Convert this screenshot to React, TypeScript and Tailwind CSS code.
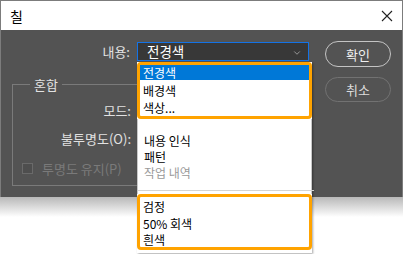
import { ChevronDown } from "lucide-react";

const font = { fontFamily: '"Noto Sans CJK KR", "Noto Sans", sans-serif' };

function ListRow({
  label,
  active = false,
  dim = false,
  h = "h-[17px]",
}: {
  label: string;
  active?: boolean;
  dim?: boolean;
  h?: string;
}) {
  return (
    <div
      className={`flex ${h} items-center pl-[3px] text-[12px] leading-none ${
        active ? "bg-[#0078d7] text-white" : dim ? "text-[#9a9a9a]" : "text-black"
      }`}
    >
      {label}
    </div>
  );
}

function FillMenu() {
  return (
    <div className="absolute left-[-1px] top-[19px] z-10 flex h-[191px] w-[175px] flex-col bg-white shadow-[1px_1px_2px_rgba(0,0,0,0.35)]">
      <div className="h-[57px] rounded-[4px] border-[3px] border-[#ffa300]">
        <ListRow label="전경색" active h="h-[15px]" />
        <div className="h-[2px]" />
        <ListRow label="배경색" />
        <ListRow label="색상..." />
      </div>
      <div className="flex flex-col border-x border-[#c8c8c8] pl-[3px] pt-[14px]">
        <ListRow label="내용 인식" h="h-[16px]" />
        <ListRow label="패턴" h="h-[16px]" />
        <ListRow label="작업 내역" dim h="h-[16px]" />
        <div className="mx-[-3px] mt-[9px] h-px bg-[#d4d4d4]" />
        <div className="h-[3px]" />
      </div>
      <div className="h-[56px] rounded-[4px] border-[3px] border-[#ffa300] pt-[2px]">
        <ListRow label="검정" h="h-[16.5px]" />
        <ListRow label="50% 회색" h="h-[16.5px]" />
        <ListRow label="흰색" h="h-[16.5px]" />
      </div>
    </div>
  );
}

function FieldLabel({ children }: { children: string }) {
  return (
    <span className="w-[118px] text-right text-[13px] leading-none text-[#e2e2e2]">
      {children}
    </span>
  );
}

export default function App() {
  return (
    <div className="flex h-[254px] w-[403px] flex-col overflow-hidden bg-white" style={font}>
      <div className="shrink-0 border border-b-0 border-[#7c7c7c]">
        {/* title bar */}
        <div className="flex h-[29px] items-center justify-between bg-white px-[9px]">
          <span className="text-[14px] leading-none text-black">칠</span>
          <svg width="12" height="12" viewBox="0 0 12 12">
            <path d="M1 1 L11 11 M11 1 L1 11" stroke="#222" strokeWidth="1.1" />
          </svg>
        </div>

        {/* body */}
        <div className="flex h-[167px] bg-[#535353]">
          <div className="flex w-[311px] flex-col">
            <div className="mt-[12px] flex h-[19px] items-center">
              <span className="w-[129px] text-right text-[13px] leading-none text-[#e2e2e2]">
                내용:
              </span>
              <div className="relative ml-[7px] flex h-[19px] w-[172px] items-center justify-between border border-[#1473e6] bg-[#383838] pl-[9px] pr-[6px]">
                <span className="text-[13.5px] leading-none text-white">전경색</span>
                <ChevronDown size={10} strokeWidth={2} className="mt-[2px] text-[#a8a8a8]" />
                <FillMenu />
              </div>
            </div>

            <div className="ml-[11px] mt-[23px] flex h-[102px] w-[298px] flex-col border border-[#7a7a7a]">
              <div className="ml-[17px] -mt-[8px] h-[15px] w-fit bg-[#535353] px-[4px] text-[13px] leading-[15px] text-[#e2e2e2]">
                혼합
              </div>
              <div className="mt-[10px] flex h-[16px] items-center">
                <FieldLabel>모드:</FieldLabel>
              </div>
              <div className="mt-[12px] flex h-[16px] items-center">
                <FieldLabel>불투명도(O):</FieldLabel>
              </div>
              <div className="mt-[14px] flex h-[16px] items-center pl-[9px]">
                <span className="h-[11px] w-[11px] border border-[#6a6a6a] bg-[#4e4e4e]" />
                <span className="ml-[9px] text-[13px] leading-none text-[#7a7a7a]">
                  투명도 유지(P)
                </span>
              </div>
            </div>
          </div>

          <div className="flex flex-col gap-[10px] pl-[13px] pt-[11px]">
            <button className="flex h-[26px] w-[66px] items-center justify-center rounded-full border border-[#c4c4c4] text-[13px] leading-none text-[#f0f0f0]">
              확인
            </button>
            <button className="flex h-[25px] w-[66px] items-center justify-center rounded-full border border-[#727272] text-[13px] leading-none text-[#dcdcdc]">
              취소
            </button>
          </div>
        </div>
      </div>
      {/* drop shadow under the dialog */}
      <div className="h-[20px] shrink-0 bg-gradient-to-b from-[#b8b8b8] to-white" />
    </div>
  );
}
